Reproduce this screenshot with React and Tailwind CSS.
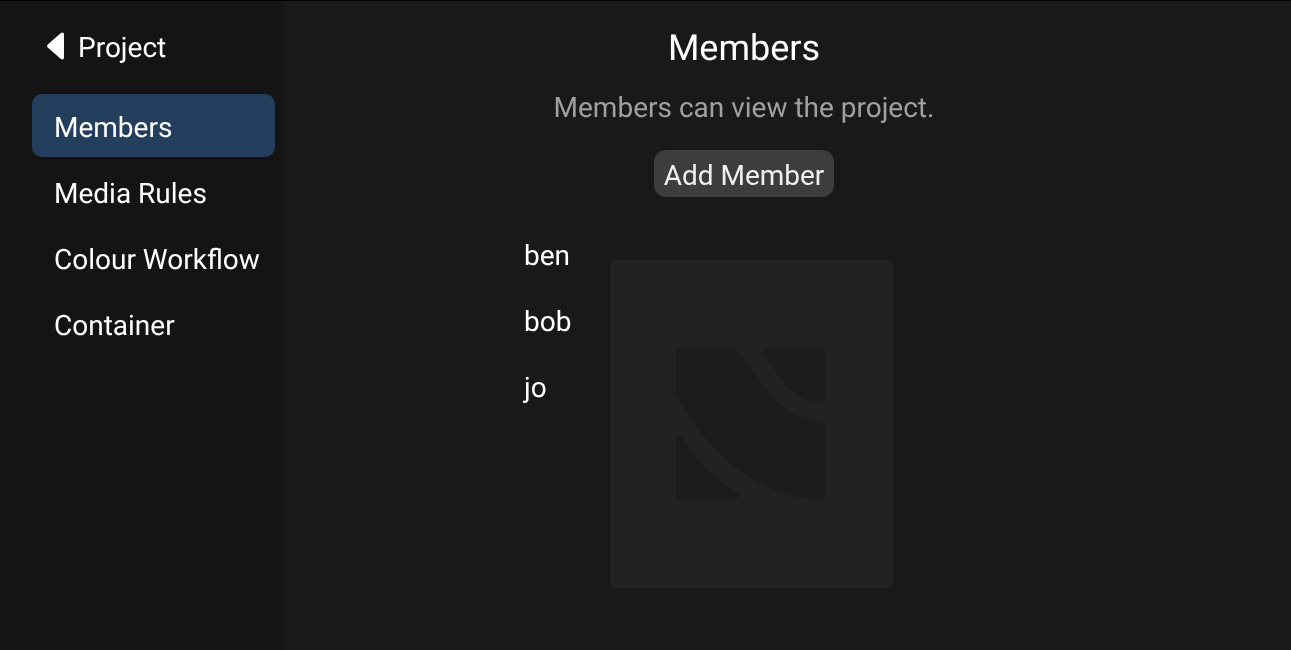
export default function App() {
  const nav = ["Members", "Media Rules", "Colour Workflow", "Container"];
  return (
    <div className="h-[650px] w-[1291px] overflow-hidden flex border-t border-black bg-[#191919] text-white font-['Roboto',sans-serif] [text-rendering:geometricPrecision]">
      <aside className="w-[284px] shrink-0 bg-[#141414]">
        <div className="pl-8 pr-[9px] will-change-transform">
          <div className="flex items-center h-[93px] pl-[15px] gap-[14px] text-[28px] leading-[40px]">
            <svg width="17" height="28" viewBox="0 0 18 30" preserveAspectRatio="none" className="shrink-0 mb-[3px]">
              <path d="M15.5 0.8 Q18 0 18 3 L18 27 Q18 30 15.5 29.2 Q14.5 28.8 13.5 27.8 L0.8 16.5 Q-0.5 15 0.8 13.5 L13.5 2.2 Q14.5 1.2 15.5 0.8 Z" fill="#fff" />
            </svg>
            <span>Project</span>
          </div>
          <nav className="flex flex-col gap-[3px]">
            {nav.map((n, i) => (
              <div key={n} className={`h-[63px] flex items-center pl-[22px] pt-[4px] text-[28px] rounded-[10px] whitespace-nowrap ${i === 0 ? "bg-[#243f5e]" : ""}`}>
                {n}
              </div>
            ))}
          </nav>
        </div>
      </aside>
      <main className="w-[920px] flex flex-col items-center will-change-transform">
        <h1 className="text-[36px] leading-[46px] font-normal mt-[24px]">Members</h1>
        <p className="text-[28px] leading-[40px] text-[#a0a0a0] mt-[17px]">Members can view the project.</p>
        <button className="mt-[22px] h-[47px] px-[10px] pt-[4px] rounded-[12px] bg-[#3d3d3d] text-[28px] text-[#f0f0f0]">Add Member</button>
        <div className="self-start ml-[240px] flex">
          <ul className="w-[86px] mt-[26px] text-[28px]">
            <li className="h-[66px] flex items-center">ben</li>
            <li className="h-[66px] flex items-center">bob</li>
            <li className="h-[66px] flex items-center">jo</li>
          </ul>
          <div className="mt-[63px] w-[283px] h-[328px] rounded-[5px] bg-[#222222] flex items-center justify-center pr-[1px]">
            <svg width="150" height="150" viewBox="0 0 450 450">
              <g fill="#1c1c1c">
                <path d="M0 8 Q0 0 8 0 L174 0 Q182 0 187 8 L282 135 Q340 212 442 218 Q450 219 450 226 L450 442 Q450 450 442 450 L410 450 C280 445 150 350 70 244 L5 145 Q0 138 0 130 Z" />
                <path d="M262 14 Q258 0 270 0 L442 0 Q450 0 450 8 L450 154 Q450 162 442 162 Q370 156 325 105 Z" />
                <path d="M0 274 Q0 262 8 262 Q14 262 18 268 Q85 372 183 430 Q192 436 189 442 Q186 450 180 450 L8 450 Q0 450 0 442 Z" />
              </g>
            </svg>
          </div>
        </div>
      </main>
    </div>
  );
}
